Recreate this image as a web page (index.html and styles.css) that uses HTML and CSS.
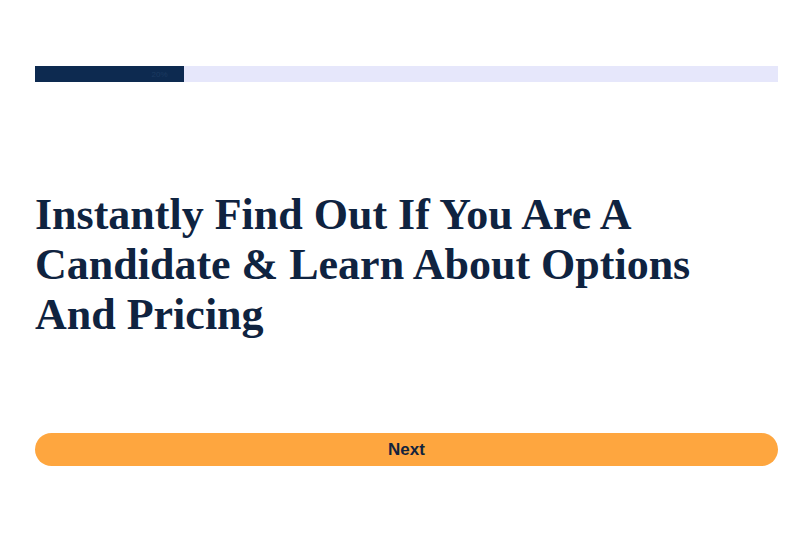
FILE: index.html
```html
<!DOCTYPE html>
<html lang="en">
<head>
  <meta charset="UTF-8" />
  <meta name="viewport" content="width=device-width, initial-scale=1" />
  <title>Candidate Quiz</title>
  <link rel="stylesheet" href="styles.css">
</head>
<body>
  <div class="container">
    <div class="progress">
      <div class="progress-fill">
        <span class="progress-label">20%</span>
      </div>
    </div>

    <h1 class="title">Instantly Find Out If You Are A Candidate &amp; Learn About Options And Pricing</h1>

    <button class="next-btn">Next</button>
  </div>
</body>
</html>
```

FILE: styles.css
```css
body {
  margin: 0;
  background-color: #ffffff;
  font-family: "Liberation Sans", Arial, sans-serif;
}

.container {
  padding: 66px 22px 0 35px;
}

.progress {
  height: 16px;
  background-color: #e6e7fb;
}

.progress-fill {
  width: 20%;
  height: 100%;
  background-color: #0d2a50;
  display: flex;
  align-items: center;
  justify-content: flex-end;
}

.progress-label {
  font-size: 8px;
  color: #1c3a60;
  margin-right: 16px;
}

.title {
  margin: 108px 0 0 0;
  width: 680px;
  font-family: "Liberation Serif", "Times New Roman", serif;
  font-weight: 700;
  font-size: 44px;
  line-height: 50px;
  color: #0f2340;
}

.next-btn {
  display: block;
  width: 100%;
  height: 33px;
  margin-top: 93px;
  border: none;
  border-radius: 17px;
  background-color: #fea63f;
  color: #12233d;
  font-family: "Liberation Sans", Arial, sans-serif;
  font-weight: 700;
  font-size: 17px;
  cursor: pointer;
}
```
